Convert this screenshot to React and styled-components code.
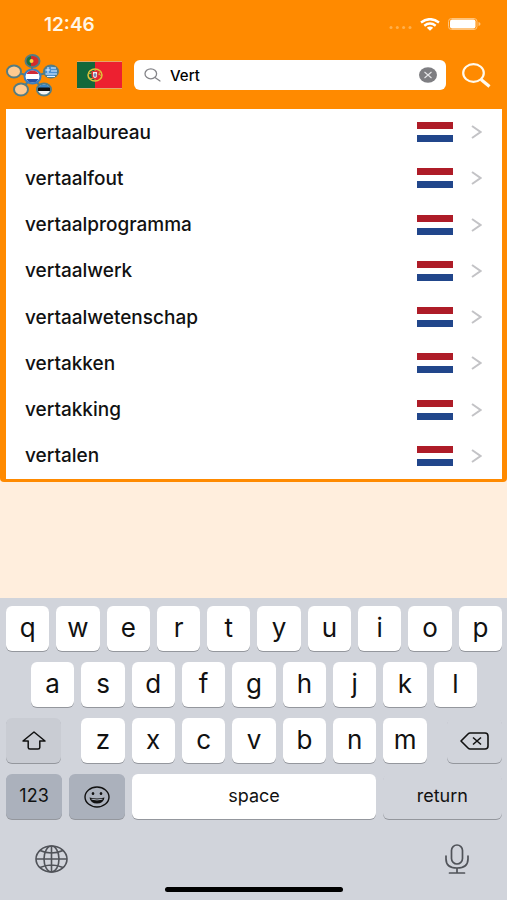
import React, {useState} from "react";
import styled, {createGlobalStyle} from "styled-components";

const GlobalStyle = createGlobalStyle`
  * {
    box-sizing: border-box;
  }
  body {
    margin: 0;
    background: #ffeedd;
    font-family: Inter, "Liberation Sans", sans-serif;
  }
  button, input {
    font-family: inherit;
    color: inherit;
  }
  svg {
    display: block;
    flex-shrink: 0;
  }
`;

const Wrapper = styled.div`
  display: flex;
  flex-direction: column;
  min-height: 100vh;
  color: #111;
`;

const TopPanel = styled.div`
  padding: 0 5px 3px 6px;
  background: #ff8a00;
  border-radius: 0 0 4px 4px;
`;

const StatusBar = styled.div`
  display: flex;
  align-items: center;
  justify-content: space-between;
  height: 48px;
  padding: 0 21px 0 38px;
  color: #fff6e6;
`;

const Clock = styled.time`
  font-size: 19px;
  font-weight: 600;
`;

const StatusIcons = styled.div`
  display: flex;
  align-items: center;
  gap: 8px;
`;

const Header = styled.header`
  display: flex;
  align-items: center;
  height: 61px;
  padding: 0 11px 7px 0;
`;

const IconButton = styled.button`
  display: flex;
  padding: 0;
  border: none;
  background: none;
  cursor: pointer;
`;

const LanguageButton = styled(IconButton)`
  margin: 0 12px 0 17px;
`;

const SearchBox = styled.form`
  display: flex;
  flex: 1;
  align-items: center;
  min-width: 0;
  height: 30px;
  margin-right: 16px;
  padding: 0 9px 0 10px;
  border-radius: 6px;
  background: #fff;
`;

const SearchInput = styled.input`
  flex: 1;
  min-width: 0;
  padding: 0 9px;
  border: none;
  outline: none;
  background: none;
  color: #000;
  font-size: 15px;
  font-weight: 500;
`;

const WordList = styled.ul`
  display: grid;
  grid-auto-rows: 1fr;
  min-height: 370px;
  margin: 0;
  padding: 0;
  background: #fff;
  list-style: none;
`;

const WordLink = styled.a`
  display: flex;
  align-items: center;
  gap: 18px;
  height: 100%;
  padding: 0 20px 0 19px;
  color: #111;
  font-size: 19px;
  font-weight: 500;
  text-decoration: none;
`;

const Word = styled.span`
  flex: 1;
`;

const Spacer = styled.div`
  flex: 1;
`;

const Keyboard = styled.section`
  display: flex;
  flex-direction: column;
  gap: 11px;
  padding: 8px 5px 8px 6px;
  background: #d1d4db;
`;

const KeyRow = styled.div`
  display: grid;
  grid-template-columns: ${(props) => props.$columns};
  gap: ${(props) => props.$gap || "7px"};
  padding: 0 ${(props) => props.$inset || "0"};
`;

const keyColors = {
  light: "#fff",
  plain: "#d1d4db",
  shift: "#c9ccd3",
  dark: "#abb1bc",
};

const Key = styled.button`
  display: flex;
  align-items: center;
  justify-content: center;
  min-width: 0;
  height: 45px;
  padding: 0 0 ${(props) => (props.$icon ? "0" : "2px")};
  border: none;
  border-radius: 6px;
  background: ${(props) => keyColors[props.$tone || "light"]};
  box-shadow: 0 1px 0 #94979d;
  font-size: ${(props) => (props.$label ? "18px" : "26px")};
  line-height: 26px;
  cursor: pointer;
`;

const KeyboardFooter = styled.div`
  display: flex;
  align-items: center;
  justify-content: space-between;
  height: 46px;
  padding: 12px 33px 0 29px;
`;

const HomeBar = styled.div`
  align-self: center;
  width: 36%;
  height: 5px;
  border-radius: 3px;
  background: #000;
`;

const words = [
  "vertaalbureau",
  "vertaalfout",
  "vertaalprogramma",
  "vertaalwerk",
  "vertaalwetenschap",
  "vertakken",
  "vertakking",
  "vertalen",
];

const Logo = () => (
  <svg width="54" height="44" viewBox="0 0 54 44" aria-hidden="true">
    <g stroke="#537c83" strokeWidth="2">
      <path d="M26 24V8M26 24L8 18.500M26 24L45 18.500M26 24L15 37M26 24L38 37" />
      <ellipse cx="26.500" cy="8" rx="7" ry="6" fill="#d52b2a" />
      <ellipse cx="8" cy="18.500" rx="7" ry="6" fill="#ffca91" />
      <ellipse cx="45" cy="18.500" rx="7" ry="6" fill="#4c91d4" />
      <ellipse cx="15" cy="36.500" rx="7" ry="6" fill="#ffca91" />
      <ellipse cx="38" cy="36.500" rx="7" ry="6" fill="#f4f6f8" />
      <ellipse cx="26.500" cy="23.500" rx="8" ry="7" fill="#fff" stroke="#3b7fc0" />
    </g>
    <path d="M25 3Q20.500 4 20.500 8T25 13Z" fill="#187440" />
    <circle cx="25.500" cy="8" r="2" fill="#f6d445" />
    <path d="M20.500 21Q22 17.500 26.500 17.500T32.500 21Z" fill="#cf2b38" />
    <path d="M20.500 26Q22 29.500 26.500 29.500T32.500 26Z" fill="#2752a3" />
    <path d="M45 15H50M45 18H51M39.500 21H51M41 23.500H49M39.500 17H44M42 14V20" stroke="#e4f2ff" fill="none" />
    <path d="M32.500 35Q33 31.500 38 31.500T43.500 35Z" fill="#3984c4" />
    <path d="M32 34.500H44V38H32Z" fill="#111" />
  </svg>
);

const PortugueseFlag = () => (
  <svg width="45" height="28" viewBox="0 0 45 28" aria-hidden="true">
    <path d="M0 0H45V28H0Z" fill="#e5a568" />
    <path d="M0 1H18V27H0Z" fill="#12683b" />
    <path d="M18 1H45V27H18Z" fill="#ed2030" />
    <ellipse cx="18" cy="14" rx="7" ry="6" fill="none" stroke="#dfc53a" strokeWidth="1.500" />
    <path d="M11 13Q18 10 25 15M12 17Q18 20 24 10M18 8V20" fill="none" stroke="#d8b83a" />
    <path d="M14.500 10H21.500V15Q21 18 18 18.500Q15 18 14.500 15Z" fill="#d83436" />
    <path d="M16 11H20V15Q19.500 17 18 17T16 15Z" fill="#f4edf0" />
    <path d="M18 12V16M16.500 14H19.500" stroke="#5165a0" />
  </svg>
);

const DutchFlag = () => (
  <svg width="36" height="20" viewBox="0 0 36 20" role="img" aria-label="Nederlands">
    <path d="M0 0H36V20H0Z" fill="#fff" />
    <path d="M0 0H36V7H0Z" fill="#ae1c28" />
    <path d="M0 13H36V20H0Z" fill="#21468b" />
  </svg>
);

const Chevron = () => (
  <svg width="11" height="14" viewBox="0 0 11 14" fill="none" stroke="#c3c3c6" strokeWidth="2" aria-hidden="true">
    <path d="M1 1L9.500 7L1 13" />
  </svg>
);

const SignalDots = () => (
  <svg width="23" height="12" viewBox="0 0 23 12" fill="#ffb04d" aria-hidden="true">
    <circle cx="2" cy="9.500" r="1.500" />
    <circle cx="8.300" cy="9.500" r="1.500" />
    <circle cx="14.600" cy="9.500" r="1.500" />
    <circle cx="21" cy="9.500" r="1.500" />
  </svg>
);

const Wifi = () => (
  <svg width="20" height="13" viewBox="0 0 20 13" fill="none" stroke="#fff" strokeWidth="2.400" aria-hidden="true">
    <path d="M1 4.500Q10 -2.200 19 4.500" />
    <path d="M4.300 7.700Q10 3.300 15.700 7.700" />
    <path d="M6.800 9.700Q10 7.500 13.200 9.700L10 12.700Z" fill="#fff" stroke="none" />
  </svg>
);

const Battery = () => (
  <svg width="33" height="12" viewBox="0 0 33 12" aria-hidden="true">
    <rect x="0.500" y="0.500" width="28.500" height="11" rx="3" fill="none" stroke="#ffc47c" />
    <rect x="2" y="1.500" width="25.500" height="9" rx="2" fill="#fff" />
    <path d="M30.500 4Q32.500 4.500 32.500 6T30.500 8Z" fill="#ffc47c" />
  </svg>
);

const SmallSearch = () => (
  <svg width="17" height="14" viewBox="0 0 17 14" fill="none" stroke="#858589" strokeWidth="1.300" strokeLinecap="round" aria-hidden="true">
    <ellipse cx="6.800" cy="5.800" rx="5.800" ry="5" />
    <path d="M11 9.500L16 13" />
  </svg>
);

const ClearIcon = () => (
  <svg width="18" height="16" viewBox="0 0 18 16" aria-hidden="true">
    <ellipse cx="9" cy="8" rx="9" ry="7.700" fill="#7e7e82" />
    <path d="M5.500 5L12.500 11M12.500 5L5.500 11" stroke="#e6e6e8" strokeWidth="1.100" />
  </svg>
);

const LargeSearch = () => (
  <svg width="29" height="25" viewBox="0 0 29 25" fill="none" stroke="#fff9ed" aria-hidden="true">
    <ellipse cx="11.500" cy="10" rx="10.300" ry="8.800" strokeWidth="2.200" />
    <path d="M19 16.500L27.500 23.500" strokeWidth="3.200" />
  </svg>
);

const ShiftIcon = () => (
  <svg width="26" height="19" viewBox="0 0 26 19" fill="none" stroke="#111" strokeWidth="1.500" strokeLinejoin="round" aria-hidden="true">
    <path d="M13 1L24 10H18.800V16.500Q18.800 18 17 18H9Q7.200 18 7.200 16.500V10H2Z" />
  </svg>
);

const BackspaceIcon = () => (
  <svg width="29" height="18" viewBox="0 0 29 18" fill="none" stroke="#111" strokeWidth="1.600" strokeLinejoin="round" aria-hidden="true">
    <path d="M10 1H25Q28 1 28 4V14Q28 17 25 17H10Q9 17 8 16L1 9L8 2Q9 1 10 1Z" />
    <path d="M13 5.500L21 12.500M21 5.500L13 12.500" />
  </svg>
);

const SmileIcon = () => (
  <svg width="26" height="22" viewBox="0 0 26 22" aria-hidden="true">
    <ellipse cx="13" cy="11" rx="12" ry="10" fill="none" stroke="#111" strokeWidth="1.400" />
    <ellipse cx="9" cy="7.500" rx="1.300" ry="1.500" fill="#111" />
    <ellipse cx="17" cy="7.500" rx="1.300" ry="1.500" fill="#111" />
    <path d="M5.500 11.500Q13 13.500 20.500 11.500Q19.500 17.500 13 17.500T5.500 11.500Z" fill="#111" />
    <path d="M7.500 13.200Q13 14.700 18.500 13.200" fill="none" stroke="#abb1bc" />
  </svg>
);

const GlobeIcon = () => (
  <svg width="33" height="28" viewBox="0 0 33 28" fill="none" stroke="#505359" strokeWidth="1.600" aria-hidden="true">
    <ellipse cx="16.500" cy="14" rx="15.500" ry="13" />
    <ellipse cx="16.500" cy="14" rx="7.500" ry="13" />
    <path d="M16.500 1V27M1 14H32M5 5.500Q16.500 10.500 28 5.500M5 22.500Q16.500 17.500 28 22.500" />
  </svg>
);

const MicIcon = () => (
  <svg width="24" height="30" viewBox="0 0 24 30" fill="none" stroke="#505359" strokeWidth="1.700" strokeLinecap="round" aria-hidden="true">
    <rect x="6.500" y="1" width="11" height="19" rx="5.500" />
    <path d="M1 12V15Q1 24 12 24T23 15V12M12 24V29M4.500 29H19.500" />
  </svg>
);

const App = () => {
  const [query, setQuery] = useState("Vert");

  const takeInput = (event) => setQuery(event.target.value);
  const typeLetter = (letter) => setQuery(query + letter);
  const submitSearch = (event) => event.preventDefault();

  const letters = (row) =>
    row.split("").map((letter) => (
      <Key type="button" key={letter} onClick={() => typeLetter(letter)}>
        {letter}
      </Key>
    ));

  return (
    <Wrapper>
      <GlobalStyle />
      <TopPanel>
        <StatusBar>
          <Clock>12:46</Clock>
          <StatusIcons>
            <SignalDots />
            <Wifi />
            <Battery />
          </StatusIcons>
        </StatusBar>
        <Header>
          <IconButton type="button" aria-label="Languages"><Logo /></IconButton>
          <LanguageButton type="button" aria-label="Português"><PortugueseFlag /></LanguageButton>
          <SearchBox id="search" onSubmit={submitSearch}>
            <SmallSearch />
            <SearchInput aria-label="Search" value={query} onChange={takeInput} />
            <IconButton type="button" aria-label="Clear" onClick={() => setQuery("")}><ClearIcon /></IconButton>
          </SearchBox>
          <IconButton type="submit" form="search" aria-label="Search"><LargeSearch /></IconButton>
        </Header>
        <WordList>
          {words.map((word) => (
            <li key={word}>
              <WordLink href={`#${word}`}>
                <Word>{word}</Word>
                <DutchFlag />
                <Chevron />
              </WordLink>
            </li>
          ))}
        </WordList>
      </TopPanel>
      <Spacer />
      <Keyboard aria-label="Keyboard">
        <KeyRow $columns="repeat(10, 1fr)">{letters("qwertyuiop")}</KeyRow>
        <KeyRow $columns="repeat(9, 1fr)" $inset="25px">{letters("asdfghjkl")}</KeyRow>
        <KeyRow $columns="55fr 345fr 55fr" $gap="20px">
          <Key type="button" $tone="shift" $icon aria-label="Shift"><ShiftIcon /></Key>
          <KeyRow $columns="repeat(7, 1fr)">{letters("zxcvbnm")}</KeyRow>
          <Key type="button" $tone="plain" $icon aria-label="Backspace" onClick={() => setQuery(query.slice(0, -1))}>
            <BackspaceIcon />
          </Key>
        </KeyRow>
        <KeyRow $columns="56fr 56fr 243fr 119fr">
          <Key type="button" $tone="dark" $label>123</Key>
          <Key type="button" $tone="dark" $icon aria-label="Emoji"><SmileIcon /></Key>
          <Key type="button" $label onClick={() => typeLetter(" ")}>space</Key>
          <Key type="submit" form="search" $tone="plain" $label>return</Key>
        </KeyRow>
        <KeyboardFooter>
          <IconButton type="button" aria-label="Next keyboard"><GlobeIcon /></IconButton>
          <IconButton type="button" aria-label="Dictate"><MicIcon /></IconButton>
        </KeyboardFooter>
        <HomeBar />
      </Keyboard>
    </Wrapper>
  );
};

export default App;
